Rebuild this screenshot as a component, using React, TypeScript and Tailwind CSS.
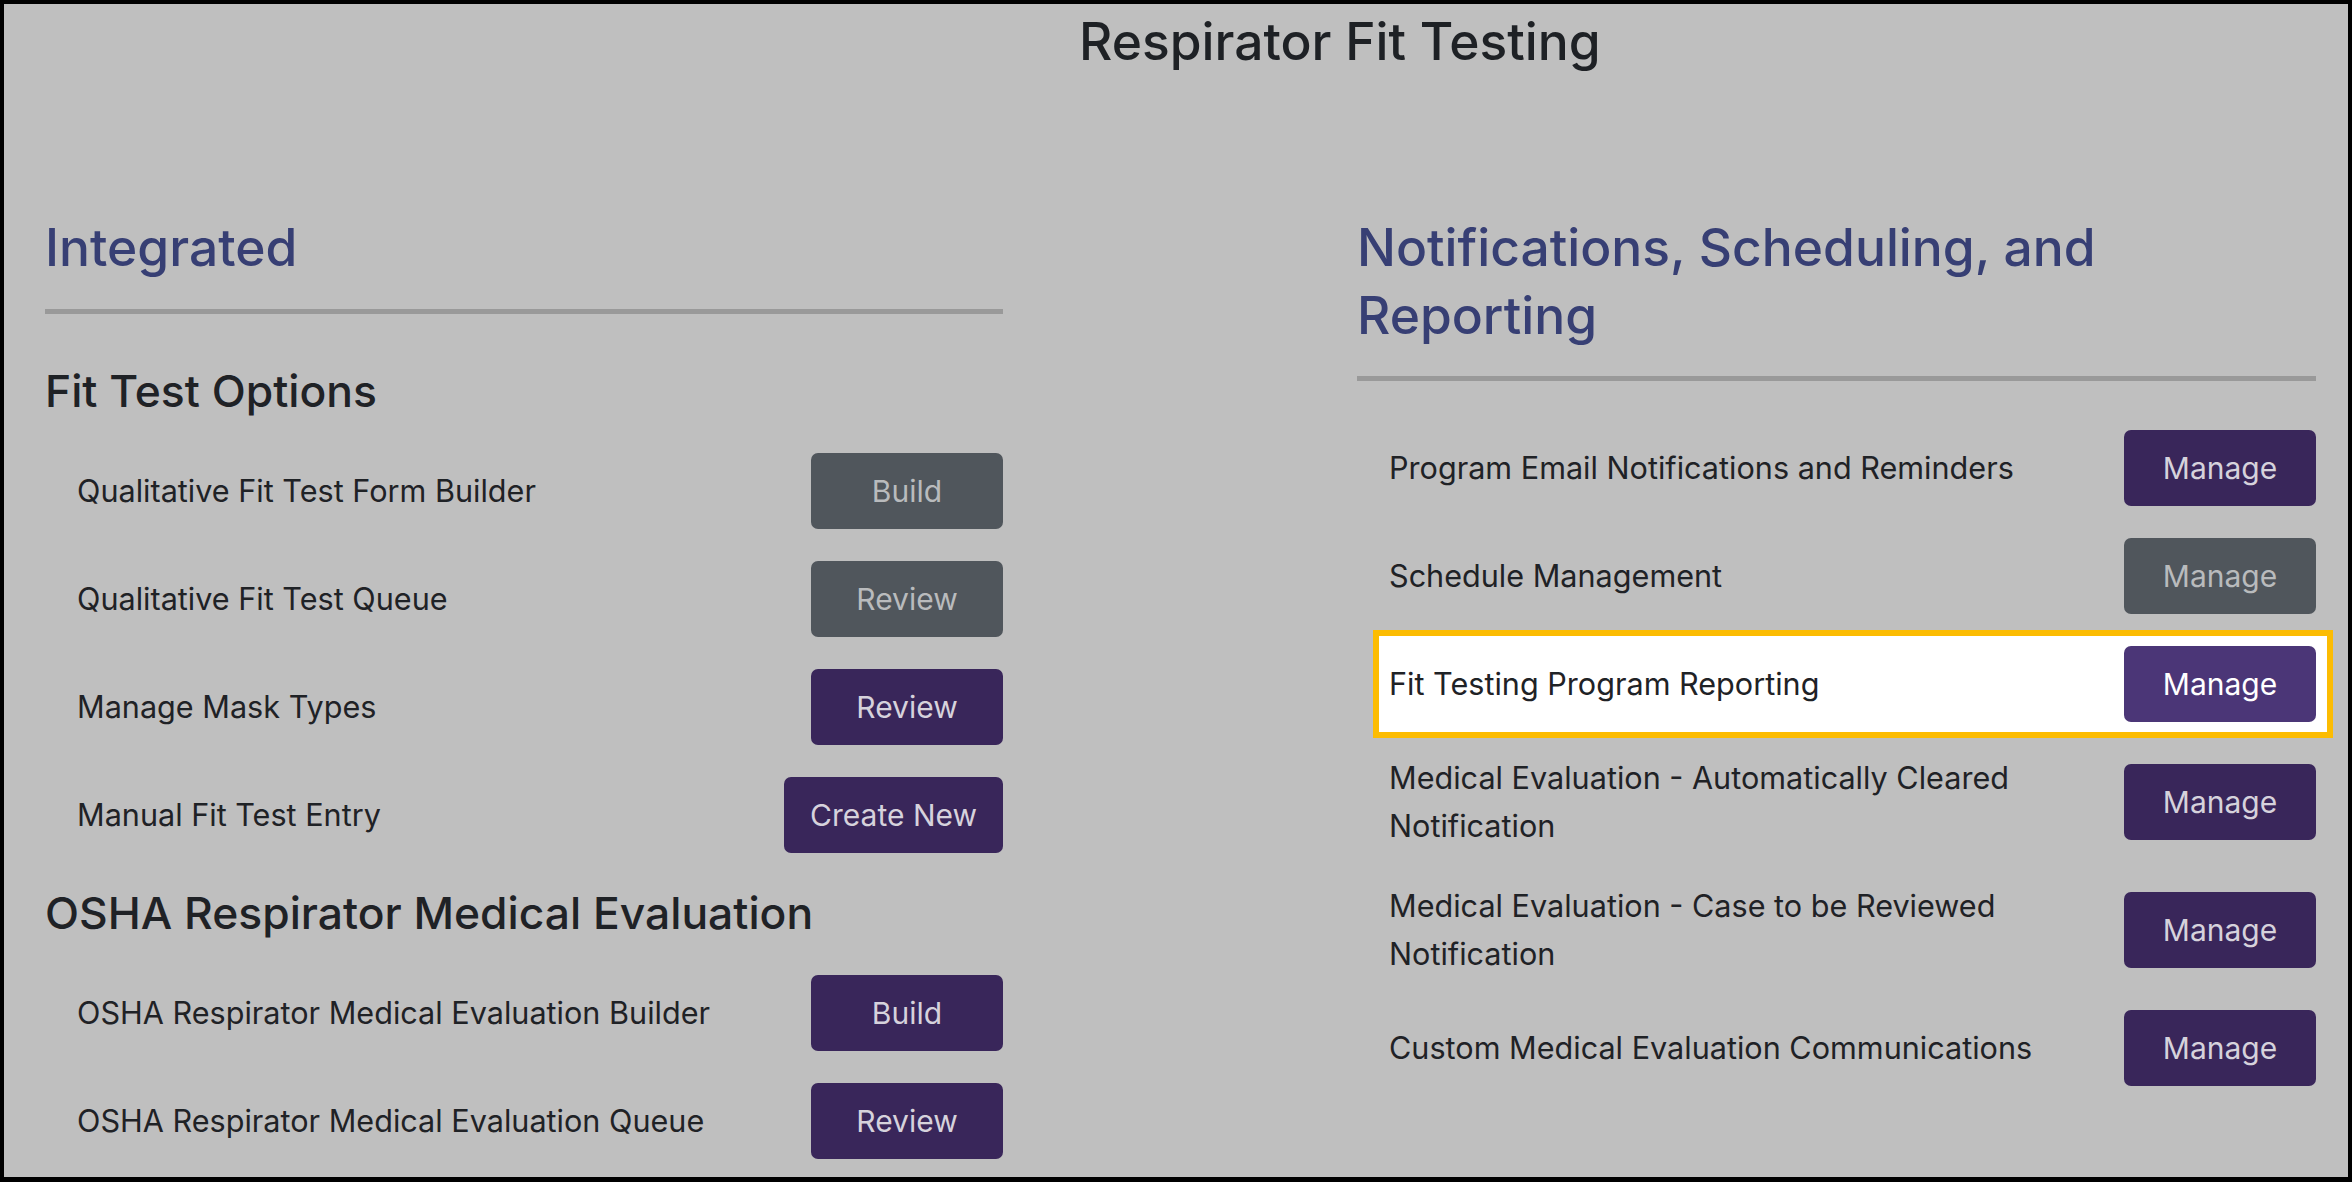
import React from 'react'

type Tone = 'purple' | 'gray' | 'active'

type Item = {
  label: React.ReactNode
  action: string
  tone: Tone
  highlight?: boolean
}

const fitTestItems: Item[] = [
  { label: 'Qualitative Fit Test Form Builder', action: 'Build', tone: 'gray' },
  { label: 'Qualitative Fit Test Queue', action: 'Review', tone: 'gray' },
  { label: 'Manage Mask Types', action: 'Review', tone: 'purple' },
  { label: 'Manual Fit Test Entry', action: 'Create New', tone: 'purple' },
]

const oshaItems: Item[] = [
  { label: 'OSHA Respirator Medical Evaluation Builder', action: 'Build', tone: 'purple' },
  { label: 'OSHA Respirator Medical Evaluation Queue', action: 'Review', tone: 'purple' },
]

const notificationItems: Item[] = [
  { label: 'Program Email Notifications and Reminders', action: 'Manage', tone: 'purple' },
  { label: 'Schedule Management', action: 'Manage', tone: 'gray' },
  { label: 'Fit Testing Program Reporting', action: 'Manage', tone: 'active', highlight: true },
  {
    label: (
      <>
        Medical Evaluation - Automatically Cleared
        <br />
        Notification
      </>
    ),
    action: 'Manage',
    tone: 'purple',
  },
  {
    label: (
      <>
        Medical Evaluation - Case to be Reviewed
        <br />
        Notification
      </>
    ),
    action: 'Manage',
    tone: 'purple',
  },
  { label: 'Custom Medical Evaluation Communications', action: 'Manage', tone: 'purple' },
]

const toneClass: Record<Tone, string> = {
  purple: 'bg-[#39265a] text-[#d6d2dc]',
  gray: 'bg-[#50565c] text-[#b9bbbd]',
  active: 'bg-[#4b3677] text-white',
}

const ActionButton: React.FC<{ action: string; tone: Tone }> = ({ action, tone }) => (
  <button
    className={`h-[76px] min-w-[192px] px-[26px] rounded-[7px] text-[30px] leading-none shrink-0 ${toneClass[tone]}`}
  >
    {action}
  </button>
)

const Row: React.FC<{ item: Item }> = ({ item }) => {
  if (item.highlight) {
    return (
      <div className="flex items-center justify-between ml-[16px] -mr-[17px] pl-[10px] pr-[11px] py-[10px] bg-white border-[6px] border-[#fcbc02]">
        <span className="text-[30.6px] leading-[48px] text-[#1f2226]">{item.label}</span>
        <ActionButton action={item.action} tone={item.tone} />
      </div>
    )
  }
  return (
    <div className="flex items-center justify-between pl-[32px] py-[16px]">
      <span className="text-[30.6px] leading-[48px] text-[#1f2226]">{item.label}</span>
      <ActionButton action={item.action} tone={item.tone} />
    </div>
  )
}

const SectionTitle: React.FC<{ children: React.ReactNode }> = ({ children }) => (
  <div className="flex flex-col">
    <h2 className="max-w-[820px] text-[51.5px] leading-[67.5px] font-medium text-[#373f74]">{children}</h2>
    <div className="mt-[27px] mb-[33px] h-[5px] bg-[#999999]" />
  </div>
)

const SubTitle: React.FC<{ children: React.ReactNode }> = ({ children }) => (
  <h3 className="h-[90px] flex items-center text-[44.4px] font-medium text-[#1f2226]">{children}</h3>
)

export default function App() {
  return (
    <div
      className="w-[2352px] h-[1182px] overflow-hidden bg-[#bfbfbf] border-l-[4px] border-r-[4px] border-t-[4px] border-b-[5px] border-black"
      style={{ fontFamily: 'Inter, "Noto Sans", sans-serif' }}
    >
      <h1 className="pt-[6px] pl-[1075px] text-[51.5px] leading-[62px] font-medium text-[#1e2125]">
        Respirator Fit Testing
      </h1>

      <div className="flex pt-[142px] pl-[41px] gap-[354px]">
        <section className="w-[958px] flex flex-col">
          <SectionTitle>Integrated</SectionTitle>
          <SubTitle>Fit Test Options</SubTitle>
          {fitTestItems.map((item, i) => (
            <Row key={i} item={item} />
          ))}
          <SubTitle>OSHA Respirator Medical Evaluation</SubTitle>
          {oshaItems.map((item, i) => (
            <Row key={i} item={item} />
          ))}
        </section>

        <section className="w-[959px] flex flex-col">
          <SectionTitle>Notifications, Scheduling, and Reporting</SectionTitle>
          {notificationItems.map((item, i) => (
            <Row key={i} item={item} />
          ))}
        </section>
      </div>
    </div>
  )
}
